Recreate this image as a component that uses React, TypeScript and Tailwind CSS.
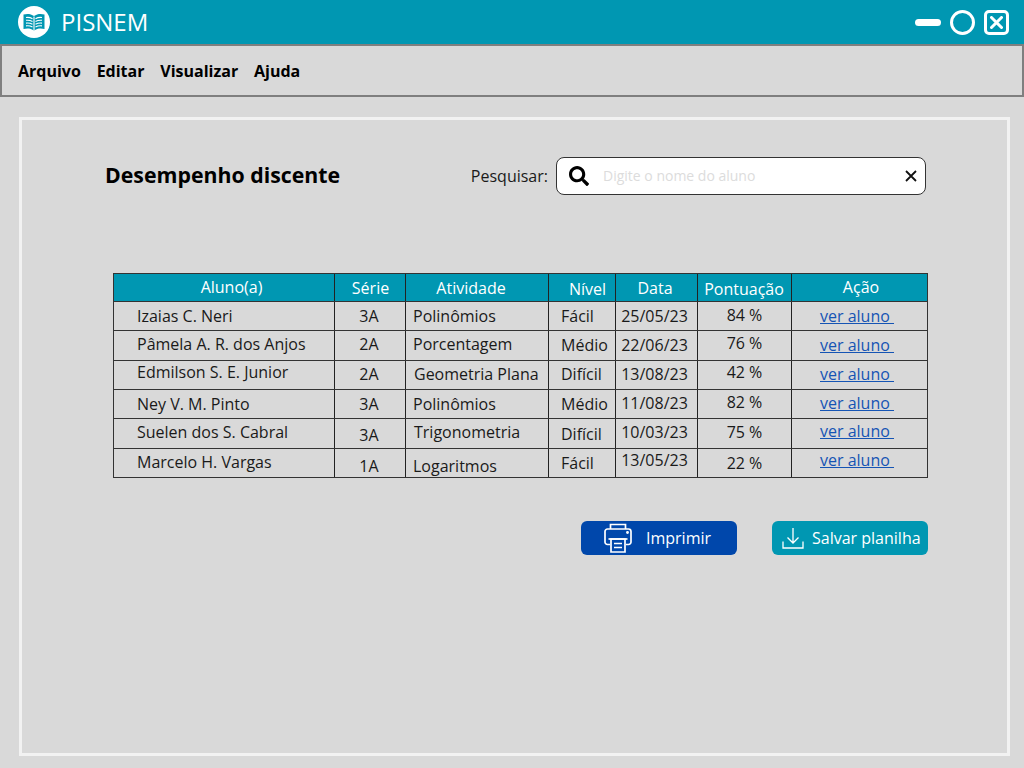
import { FaSearch } from "react-icons/fa";

const font = { fontFamily: '"Open Sans", sans-serif' };

const gridCols = "grid grid-cols-[220px_71px_143px_67px_82px_94px_136px]";

const headers = [
  { label: "Aluno(a)", cls: "pl-[15px] pb-[2px]" },
  { label: "Série", cls: "pl-[1px]" },
  { label: "Atividade", cls: "pr-[12px]" },
  { label: "Nível", cls: "pl-[11px] pt-[2px]" },
  { label: "Data", cls: "pr-[3px]" },
  { label: "Pontuação", cls: "pt-[2px] pr-[1px]" },
  { label: "Ação", cls: "pl-[3px] pb-[2px]" },
];

// the mockup's cells were placed by hand, so each one carries its own vertical nudge
const rows = [
  { name: "Izaias C. Neri", serie: "3A", atividade: "Polinômios", nivel: "Fácil", data: "25/05/23", nota: "84 %", h: "h-[29px]", n: "", s: "", a: "", v: "", d: "", p: "pb-[2px]", l: "", ax: "pl-[7px]" },
  { name: "Pâmela A. R. dos Anjos", serie: "2A", atividade: "Porcentagem", nivel: "Médio", data: "22/06/23", nota: "76 %", h: "h-[30px]", n: "pb-[3px]", s: "pb-[3px]", a: "pb-[3px]", v: "pb-[1px]", d: "pb-[1px]", p: "pb-[5px]", l: "pb-[1px]", ax: "pl-[7px]" },
  { name: "Edmilson S. E. Junior", serie: "2A", atividade: "Geometria Plana", nivel: "Difícil", data: "13/08/23", nota: "42 %", h: "h-[29px]", n: "pb-[6px]", s: "pb-[2px]", a: "pb-[2px]", v: "pb-[2px]", d: "pb-[2px]", p: "pb-[6px]", l: "pb-[2px]", ax: "pl-[8px]" },
  { name: "Ney V. M. Pinto", serie: "3A", atividade: "Polinômios", nivel: "Médio", data: "11/08/23", nota: "82 %", h: "h-[29px]", n: "pb-[1px]", s: "pb-[1px]", a: "pb-[1px]", v: "pb-[1px]", d: "pb-[3px]", p: "pb-[5px]", l: "pb-[3px]", ax: "pl-[7px]" },
  { name: "Suelen dos S. Cabral", serie: "3A", atividade: "Trigonometria", nivel: "Difícil", data: "10/03/23", nota: "75 %", h: "h-[30px]", n: "pb-[3px]", s: "pt-[3px]", a: "pb-[3px]", v: "pt-[1px]", d: "pb-[3px]", p: "pb-[3px]", l: "pb-[5px]", ax: "pl-[8px]" },
  { name: "Marcelo H. Vargas", serie: "1A", atividade: "Logaritmos", nivel: "Fácil", data: "13/05/23", nota: "22 %", h: "h-[29px]", n: "pb-[3px]", s: "pt-[5px]", a: "pt-[5px]", v: "pb-[1px]", d: "pb-[7px]", p: "pb-[1px]", l: "pb-[7px]", ax: "pl-[7px]" },
];

const cellBase = "flex items-center border-l border-[#222] text-[16px] leading-none text-[#1a1a1a]";

const BookLogo = () => (
  <svg viewBox="0 0 32 32" className="size-[32px]">
    <circle cx="16" cy="16" r="16" fill="#fff" />
    <path d="M5.500 8.500c3.800-1 7.500-.6 10.500 1.500 3-2.100 6.700-2.500 10.500-1.500v14.500c-3.800-1-7.500-.6-10.500 1.500-3-2.100-6.700-2.500-10.500-1.500z" fill="#0097b2" />
    <path d="M16 10.500v14M8 11.500c2.300-.3 4.600.1 6.500 1.200M8 14.300c2.300-.3 4.600.1 6.500 1.200M8 17.100c2.300-.3 4.600.1 6.500 1.200M8 19.900c2.300-.3 4.600.1 6.500 1.200M24 11.500c-2.300-.3-4.600.1-6.500 1.200M24 14.300c-2.300-.3-4.600.1-6.500 1.200M24 17.100c-2.300-.3-4.600.1-6.500 1.200M24 19.900c-2.300-.3-4.600.1-6.500 1.200" stroke="#fff" strokeWidth="1.100" fill="none" />
  </svg>
);

const WindowButtons = () => (
  <div className="flex items-center">
    <div className="h-[7px] w-[26px] rounded-full bg-white" />
    <div className="ml-[9px] size-[25px] rounded-full border-[3px] border-white" />
    <div className="ml-[9px] flex size-[25px] items-center justify-center rounded-[5px] border-[3px] border-white">
      <svg viewBox="0 0 13 13" className="size-[13px]">
        <path d="M1.500 1.500l10 10M11.500 1.500l-10 10" stroke="#fff" strokeWidth="3" strokeLinecap="round" />
      </svg>
    </div>
  </div>
);

const PrinterIcon = () => (
  <svg viewBox="0 0 28 30" className="h-[30px] w-[28px]" fill="none" stroke="#fff" strokeWidth="1.700">
    <path d="M6.500 6V1.500h15V6" />
    <path d="M6 21.500H3.500a2.500 2.500 0 0 1-2.500-2.500V8.500A2.500 2.500 0 0 1 3.500 6h21A2.500 2.500 0 0 1 27 8.500V19a2.500 2.500 0 0 1-2.500 2.500H22" />
    <path d="M4.500 16h19" />
    <path d="M7 16h14v13H7z" />
    <path d="M10 20.500h8M10 24.500h8" />
    <circle cx="23.500" cy="9.500" r=".6" fill="#fff" />
  </svg>
);

const DownloadIcon = () => (
  <svg viewBox="0 0 22 22" className="size-[22px]" fill="none" stroke="#fff" strokeWidth="1.300">
    <path d="M11 1v15M5.500 10.500 11 16l5.500-5.500" />
    <path d="M1 14.500V21h20v-6.500" />
  </svg>
);

export default function App() {
  return (
    <div className="flex h-[768px] w-[1024px] flex-col overflow-hidden bg-[#d9d9d9]" style={font}>
      <header className="flex h-[44px] shrink-0 items-center justify-between bg-[#0097b2] pl-[18px] pr-[15px]">
        <div className="flex items-center gap-[11px]">
          <BookLogo />
          <span className="text-[24px] leading-none text-white">PISNEM</span>
        </div>
        <WindowButtons />
      </header>

      <nav className="flex h-[53px] shrink-0 items-center gap-[15.800px] border-2 border-[#7f7f7f] pl-[16px] text-[16px] font-bold text-black">
        <span>Arquivo</span>
        <span>Editar</span>
        <span>Visualizar</span>
        <span>Ajuda</span>
      </nav>

      <main className="ml-[19px] mr-[14px] mt-[20px] h-[639px] border-[3px] border-[#f2f2f2] pl-[83px] pr-[81px] pt-[37px]">
        <div className="flex h-[38px] items-center justify-between">
          <h1 className="pb-[2px] text-[21.300px] font-bold text-black">Desempenho discente</h1>
          <div className="flex items-center gap-[8px]">
            <span className="text-[16px] text-[#1a1a1a]">Pesquisar:</span>
            <div className="flex h-[38px] w-[370px] items-center rounded-[8px] border border-[#333] bg-white pl-[12px] pr-[8px]">
              <FaSearch className="size-[20px] text-black" />
              <span className="ml-[14px] flex-1 pb-[2px] text-[14px] text-[#dcdcdc]">Digite o nome do aluno</span>
              <svg viewBox="0 0 12 12" className="size-[12px]">
                <path d="M1 1l10 10M11 1 1 11" stroke="#111" strokeWidth="1.800" />
              </svg>
            </div>
          </div>
        </div>

        <div className="ml-[8px] mt-[78px] w-[815px] border border-[#333]">
          <div className={`${gridCols} h-[27px] bg-[#0097b2]`}>
            {headers.map((h, i) => (
              <div key={h.label} className={`flex items-center justify-center text-[16px] leading-none text-white ${h.cls} ${i > 0 ? "border-l border-[#222]" : ""}`}>
                {h.label}
              </div>
            ))}
          </div>
          {rows.map((r) => (
            <div key={r.name} className={`${gridCols} border-t border-[#333] ${r.h}`}>
              <div className={`flex items-center pl-[23px] text-[16px] leading-none text-[#1a1a1a] ${r.n}`}>{r.name}</div>
              <div className={`${cellBase} justify-center pr-[2px] ${r.s}`}>{r.serie}</div>
              <div className={`${cellBase} ${r.ax} ${r.a}`}>{r.atividade}</div>
              <div className={`${cellBase} pl-[12px] ${r.v}`}>{r.nivel}</div>
              <div className={`${cellBase} justify-center pr-[4px] ${r.d}`}>{r.data}</div>
              <div className={`${cellBase} justify-center ${r.p}`}>{r.nota}</div>
              <div className={`${cellBase} pl-[28px] ${r.l}`}>
                <span className="text-[#1554b4] underline">ver aluno&nbsp;</span>
              </div>
            </div>
          ))}
        </div>

        <div className="ml-[8px] mt-[43px] flex w-[815px] justify-end gap-[35px]">
          <button className="flex h-[34px] w-[156px] items-center rounded-[6px] bg-[#0047ab] pl-[23px] text-[16px] text-white">
            <PrinterIcon />
            <span className="ml-[14px]">Imprimir</span>
          </button>
          <button className="flex h-[34px] w-[156px] items-center rounded-[6px] bg-[#0097b2] pl-[10px] text-[16px] text-white">
            <DownloadIcon />
            <span className="ml-[8px]">Salvar planilha</span>
          </button>
        </div>
      </main>
    </div>
  );
}
